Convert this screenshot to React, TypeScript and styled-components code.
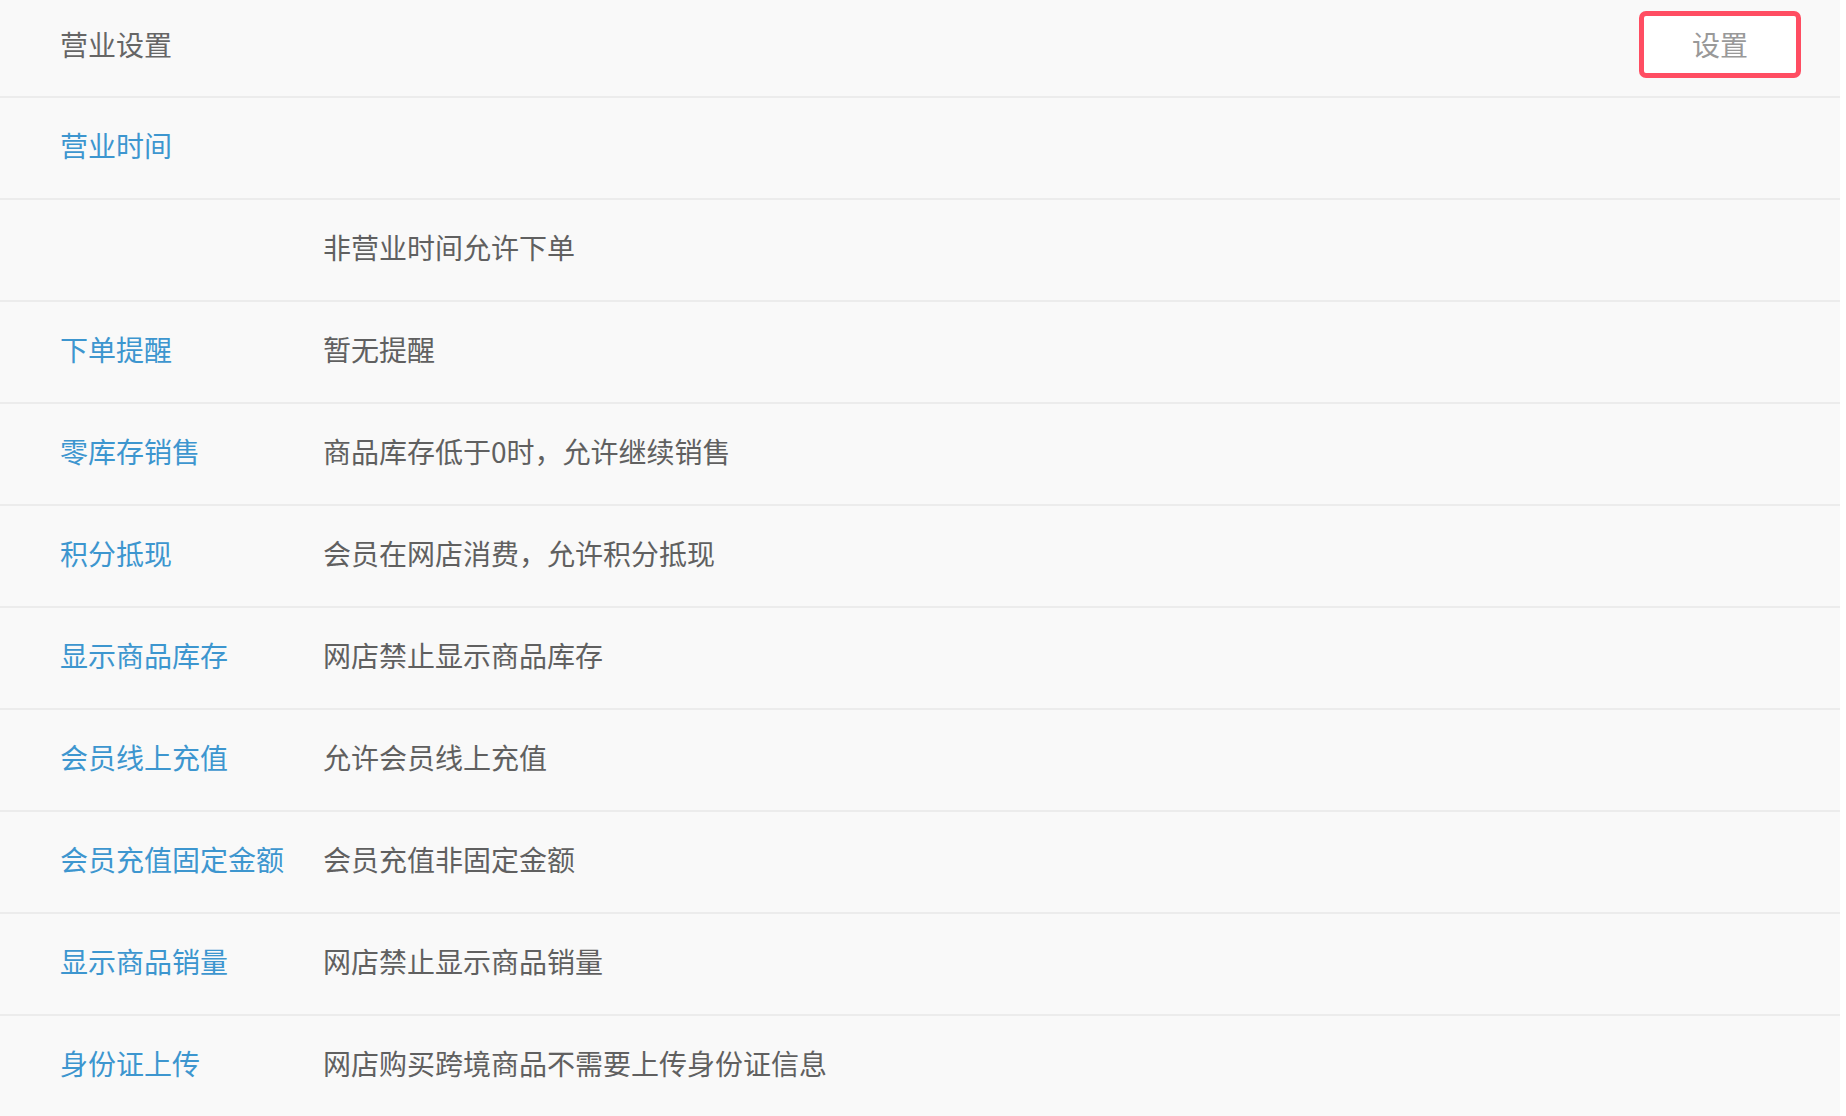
import styled, { createGlobalStyle } from "styled-components";

const settings = [
  { label: "营业时间", value: "" },
  { label: "", value: "非营业时间允许下单" },
  { label: "下单提醒", value: "暂无提醒" },
  { label: "零库存销售", value: "商品库存低于0时，允许继续销售" },
  { label: "积分抵现", value: "会员在网店消费，允许积分抵现" },
  { label: "显示商品库存", value: "网店禁止显示商品库存" },
  { label: "会员线上充值", value: "允许会员线上充值" },
  { label: "会员充值固定金额", value: "会员充值非固定金额" },
  { label: "显示商品销量", value: "网店禁止显示商品销量" },
  { label: "身份证上传", value: "网店购买跨境商品不需要上传身份证信息" },
];

function App() {
  return (
    <>
      <GlobalStyle />
      <Panel>
        <Header>
          <Title>营业设置</Title>
          <SettingButton type="button">设置</SettingButton>
        </Header>

        {settings.map((item, i) => (
          <Row key={i}>
            <Label>{item.label}</Label>
            <Value>{item.value}</Value>
          </Row>
        ))}
      </Panel>
    </>
  );
}

const GlobalStyle = createGlobalStyle`
  body {
    margin: 0;
    background: #ffffff;
    font-family: "Noto Sans CJK SC", "Noto Sans", sans-serif;
  }
`;

const Panel = styled.div`
  width: 1840px;
  height: 1116px;
  overflow: hidden;
  background-color: #f9f9f9;
`;

const Header = styled.div`
  display: flex;
  align-items: center;
  justify-content: space-between;
  height: 98px;
  padding: 0 39px 8px 60px;
  box-sizing: border-box;
  border-bottom: 2px solid #ececec;
`;

const Title = styled.div`
  font-size: 28px;
  color: #666666;
`;

const SettingButton = styled.button`
  width: 162px;
  height: 67px;
  background-color: #ffffff;
  border: 5px solid #ff4d62;
  border-radius: 7px;
  font-family: inherit;
  font-size: 28px;
  color: #999999;
  padding: 0;
  cursor: pointer;
`;

const Row = styled.div`
  display: flex;
  align-items: center;
  height: 102px;
  padding: 0 0 7px 60px;
  box-sizing: border-box;
  border-bottom: 2px solid #ececec;
`;

const Label = styled.div`
  width: 263px;
  flex-shrink: 0;
  font-size: 28px;
  color: #3d96cf;
`;

const Value = styled.div`
  font-size: 28px;
  color: #606060;
`;

export default App;
